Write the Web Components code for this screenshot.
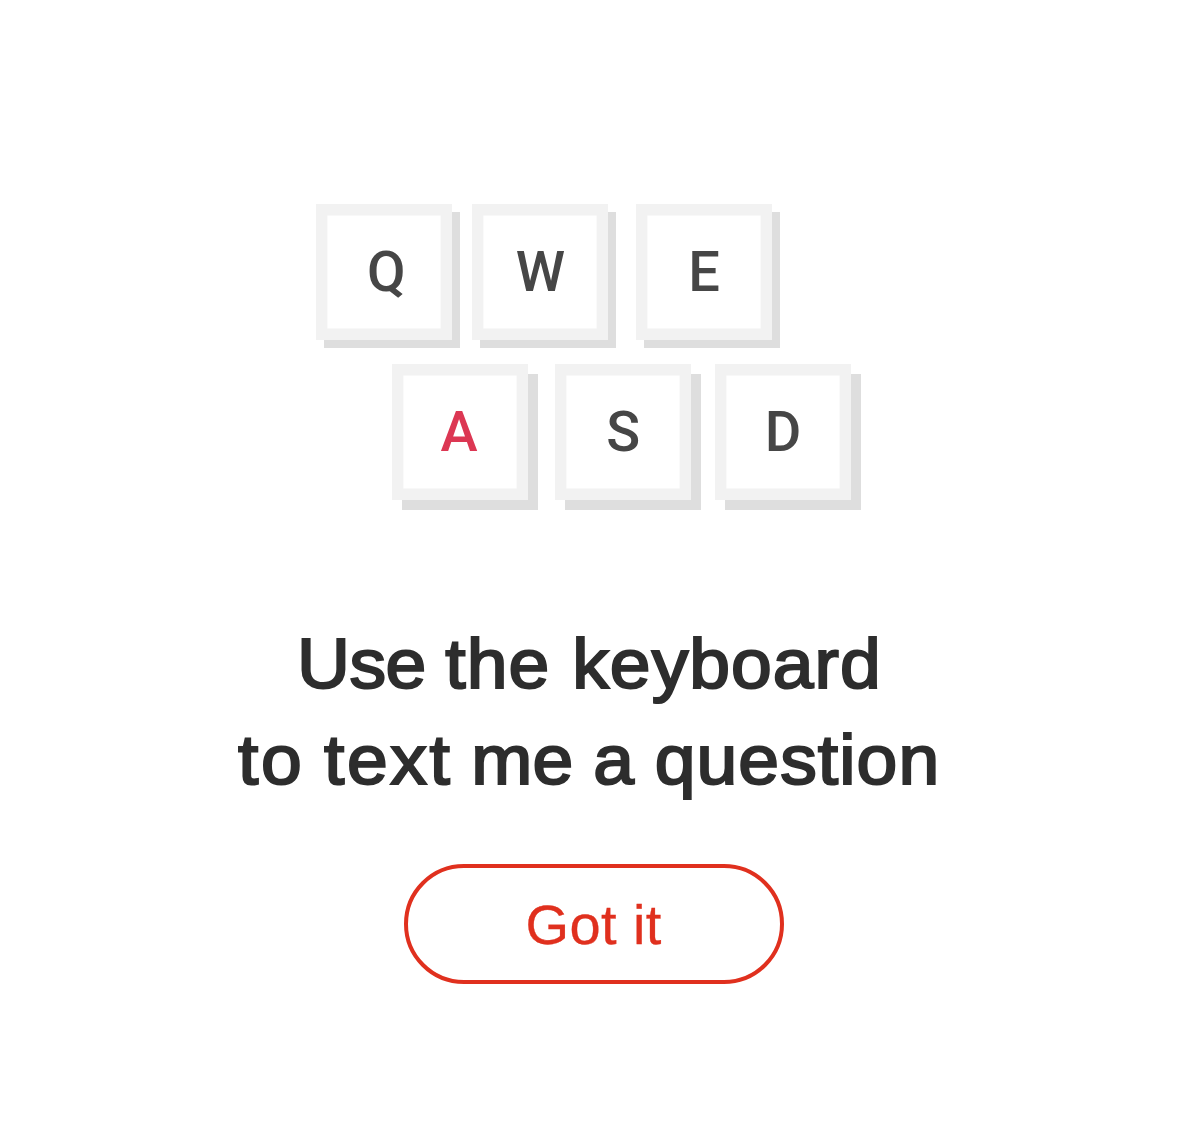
<!DOCTYPE html>
<html lang="en">
<head>
<meta charset="utf-8">
<title>Keyboard hint</title>
<style>body{margin:0;background:#fff}</style>
</head>
<body>
<keyboard-hint></keyboard-hint>
<script>
class KeyCap extends HTMLElement {
  constructor() {
    super();
    this.attachShadow({mode:'open'}).innerHTML = `<style>
      :host{display:flex;flex:none;box-sizing:border-box;width:136px;height:136px;background:#fff;
        box-shadow:inset 0 0 0 11.4px #f2f2f2,var(--depth,8px) var(--depth,8px) 0 #dedede;align-items:center;justify-content:center;
        font:500 56px/66px Roboto,sans-serif;color:#464646}
      :host([active]){color:#dc3753}
      span{display:block;transform:translate(var(--dx,0px),-.1px)}
    </style><span><slot></slot></span>`;
  }
}
customElements.define('key-cap', KeyCap);

class HeadLine extends HTMLElement {
  constructor() {
    super();
    this.attachShadow({mode:'open'}).innerHTML = `<style>
      :host{display:block;height:96px;white-space:nowrap;transform:scaleX(1.05);transform-origin:0 0;
        font:400 69.8px/96px "Liberation Sans",Arial,sans-serif;color:#2d2d2d;-webkit-text-stroke:2.1px #2d2d2d}
    </style><slot></slot>`;
  }
}
customElements.define('head-line', HeadLine);

class PillButton extends HTMLElement {
  constructor() {
    super();
    this.attachShadow({mode:'open'}).innerHTML = `<style>
      :host{display:block}
      button{display:flex;align-items:center;justify-content:center;box-sizing:border-box;width:380px;height:120px;margin:0;padding:0;
        border:4px solid #e0301e;border-radius:60px;background:#fff;color:#e0301e;font:400 56px/64px "Liberation Sans",Arial,sans-serif;letter-spacing:.4px;-webkit-text-stroke:.3px #e0301e}
      span{display:block;transform:translate(-.4px,.5px)}
    </style><button><span><slot></slot></span></button>`;
  }
}
customElements.define('pill-button', PillButton);

class KeyboardHint extends HTMLElement {
  constructor() {
    super();
    this.attachShadow({mode:'open'}).innerHTML = `<style>
      :host{display:flex;flex-direction:column;box-sizing:border-box;width:1180px;height:1148px;padding-top:204px;background:#fff}
      .row{display:flex}
      .top{padding-left:316px}
      .bottom{padding-left:392px;margin-top:24px;--depth:10px}
      h1{margin:116px 0 0;display:flex;flex-direction:column;align-items:flex-start;font:inherit}
      .l1{margin-left:297px;letter-spacing:.95px;word-spacing:-2.2px}
      .l2{margin-left:238px;letter-spacing:1.6px;word-spacing:-2px}
      pill-button{margin:56px 0 0 404px}
    </style>
    <div class="row top"><key-cap style="--dx:2.2px">Q</key-cap><key-cap style="margin-left:20px;--dx:.4px">W</key-cap><key-cap style="margin-left:28px">E</key-cap></div>
    <div class="row bottom"><key-cap active style="--dx:-1px">A</key-cap><key-cap style="margin-left:27px;--dx:.3px">S</key-cap><key-cap style="margin-left:24px">D</key-cap></div>
    <h1><head-line class="l1"><span style="letter-spacing:-.5px">Use</span> <span style="margin-left:.5px">the</span> <span style="margin-left:2.8px">keyboard</span></head-line><head-line class="l2"><span style="letter-spacing:2.4px">to</span> <span style="letter-spacing:2.4px">text</span> <span style="margin-left:-1px;letter-spacing:.1px">me</span> a <span style="margin-left:-.8px;letter-spacing:1px">question</span></head-line></h1>
    <pill-button>Got it</pill-button>`;
  }
}
customElements.define('keyboard-hint', KeyboardHint);
</script>
</body>
</html>
